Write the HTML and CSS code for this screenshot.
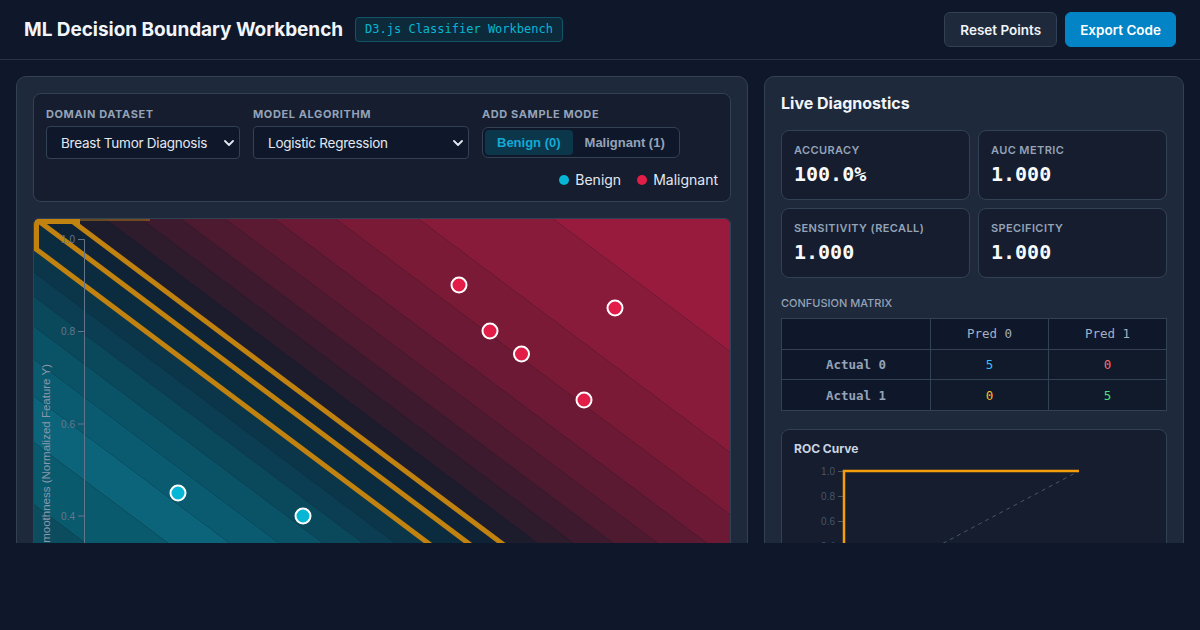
FILE: index.html
```html
<!DOCTYPE html>
<html lang="en">
<head>
<meta charset="utf-8">
<title>ML Decision Boundary Workbench</title>
<link rel="stylesheet" href="styles.css">
</head>
<body>
<header class="topbar">
  <div class="brand">
    <h1 class="title">ML Decision Boundary Workbench</h1>
    <span class="badge">D3.js Classifier Workbench</span>
  </div>
  <div class="actions">
    <button class="btn btn-secondary">Reset Points</button>
    <button class="btn btn-primary">Export Code</button>
  </div>
</header>

<main class="main">
  <section class="panel workspace">
    <div class="controls">
      <div class="fields">
        <div class="field">
          <label class="field-label">Domain Dataset</label>
          <div class="select-wrap select-dataset">
            <select class="select"><option>Breast Tumor Diagnosis</option></select>
            <svg class="chevron" width="10" height="6" viewBox="0 0 10 6"><path d="M1 1l4 4 4-4" fill="none" stroke="#e2e8f0" stroke-width="1.8" stroke-linecap="round" stroke-linejoin="round"/></svg>
          </div>
        </div>
        <div class="field">
          <label class="field-label">Model Algorithm</label>
          <div class="select-wrap select-model">
            <select class="select"><option>Logistic Regression</option></select>
            <svg class="chevron" width="10" height="6" viewBox="0 0 10 6"><path d="M1 1l4 4 4-4" fill="none" stroke="#e2e8f0" stroke-width="1.8" stroke-linecap="round" stroke-linejoin="round"/></svg>
          </div>
        </div>
        <div class="field field-mode">
          <label class="field-label">Add Sample Mode</label>
          <div class="toggle">
            <button class="toggle-btn active">Benign (0)</button>
            <button class="toggle-btn">Malignant (1)</button>
          </div>
        </div>
      </div>
      <div class="legend">
        <span class="legend-item"><span class="dot dot-benign"></span>Benign</span>
        <span class="legend-item"><span class="dot dot-malignant"></span>Malignant</span>
      </div>
    </div>

    <div class="plot">
      <svg class="plot-svg" width="696" height="540" viewBox="34 219 696 540">
        <g class="bands">
          <polygon points="0,-1000 800,-400 800,404 0,-196" fill="#981b3d"/>
          <polygon points="0,-196 800,404 800,505 0,-95" fill="#881a3a"/>
          <polygon points="0,-95 800,505 800,567 0,-33" fill="#7a1a37"/>
          <polygon points="0,-33 800,567 800,613 0,13" fill="#6b1934"/>
          <polygon points="0,13 800,613 800,650 0,50" fill="#5c1932"/>
          <polygon points="0,50 800,650 800,683 0,83" fill="#4d1a30"/>
          <polygon points="0,83 800,683 800,713 0,113" fill="#3e1a2e"/>
          <polygon points="0,113 800,713 800,740 0,140" fill="#2e1b2c"/>
          <polygon points="0,140 800,740 800,767 0,167" fill="#1d1c2d"/>
          <polygon points="0,167 800,767 800,792 0,192" fill="#0f2336"/>
          <polygon points="0,192 800,792 800,822 0,222" fill="#0b2b3e"/>
          <polygon points="0,222 800,822 800,847 0,247" fill="#0b3548"/>
          <polygon points="0,247 800,847 800,871 0,271" fill="#0b3e52"/>
          <polygon points="0,271 800,871 800,901 0,301" fill="#0a485c"/>
          <polygon points="0,301 800,901 800,934 0,334" fill="#0a5266"/>
          <polygon points="0,334 800,934 800,971 0,371" fill="#0a5b70"/>
          <polygon points="0,371 800,971 800,1017 0,417" fill="#0b6479"/>
          <polygon points="0,417 800,1017 800,1079 0,479" fill="#0a5a6e"/>
          <polygon points="0,479 800,1079 800,2600 0,2000" fill="#0b4c5e"/>
        </g>
        <g class="boundary" stroke="#c2820f" stroke-width="5" fill="none">
          <line x1="0" y1="167" x2="800" y2="767"/>
          <line x1="0" y1="192" x2="800" y2="792"/>
          <line x1="0" y1="222" x2="800" y2="822"/>
          <polyline points="36.5,250 36.5,221.5 80,221.5"/>
          <line x1="80" y1="220" x2="150" y2="220" stroke-width="2" opacity="0.45"/>
        </g>
        <g class="axis">
          <path d="M78,239.5H84.5V760" fill="none" stroke="#64748b"/>
          <line x1="78" y1="331.5" x2="84.5" y2="331.5" stroke="#64748b"/>
          <line x1="78" y1="424" x2="84.5" y2="424" stroke="#64748b"/>
          <line x1="78" y1="516" x2="84.5" y2="516" stroke="#64748b"/>
          <text class="tick" x="75" y="243">1.0</text>
          <text class="tick" x="75" y="335">0.8</text>
          <text class="tick" x="75" y="427.5">0.6</text>
          <text class="tick" x="75" y="519.5">0.4</text>
          <text class="axis-label" transform="translate(49.5,364) rotate(-90)">Smoothness (Normalized Feature Y)</text>
        </g>
        <g class="points" stroke="#ffffff" stroke-width="2">
          <circle cx="178" cy="493" r="7.5" fill="#06b6d4"/>
          <circle cx="303" cy="516" r="7.5" fill="#06b6d4"/>
          <circle cx="459" cy="285" r="7.5" fill="#e11d48"/>
          <circle cx="490" cy="331" r="7.5" fill="#e11d48"/>
          <circle cx="521.5" cy="354" r="7.5" fill="#e11d48"/>
          <circle cx="615" cy="308" r="7.5" fill="#e11d48"/>
          <circle cx="584" cy="400" r="7.5" fill="#e11d48"/>
        </g>
      </svg>
    </div>
  </section>

  <aside class="panel diagnostics">
    <h2 class="diag-title">Live Diagnostics</h2>
    <div class="metrics">
      <div class="metric"><div class="metric-label">Accuracy</div><div class="metric-value">100.0%</div></div>
      <div class="metric"><div class="metric-label">AUC Metric</div><div class="metric-value">1.000</div></div>
      <div class="metric"><div class="metric-label">Sensitivity (Recall)</div><div class="metric-value">1.000</div></div>
      <div class="metric"><div class="metric-label">Specificity</div><div class="metric-value">1.000</div></div>
    </div>

    <div class="cm-label">Confusion Matrix</div>
    <table class="cm">
      <colgroup><col class="col-head"><col><col></colgroup>
      <thead>
        <tr><th></th><th class="col-title">Pred 0</th><th class="col-title">Pred 1</th></tr>
      </thead>
      <tbody>
        <tr><th>Actual 0</th><td class="v-tn">5</td><td class="v-fp">0</td></tr>
        <tr><th>Actual 1</th><td class="v-fn">0</td><td class="v-tp">5</td></tr>
      </tbody>
    </table>

    <div class="roc">
      <div class="roc-title">ROC Curve</div>
      <svg class="roc-svg" width="359" height="150" viewBox="794 459 359 150">
        <path d="M838,470.5H844.5V595.5H838" fill="none" stroke="#475569"/>
        <line x1="838" y1="495.5" x2="844.5" y2="495.5" stroke="#475569"/>
        <line x1="838" y1="520.5" x2="844.5" y2="520.5" stroke="#475569"/>
        <line x1="838" y1="545.5" x2="844.5" y2="545.5" stroke="#475569"/>
        <text class="roc-tick" x="835" y="474">1.0</text>
        <text class="roc-tick" x="835" y="499">0.8</text>
        <text class="roc-tick" x="835" y="524">0.6</text>
        <text class="roc-tick" x="835" y="549">0.4</text>
        <line x1="844" y1="595" x2="1079" y2="470" stroke="#475569" stroke-dasharray="4 4"/>
        <polyline points="844,595 844,470 1079,470" fill="none" stroke="#f59e0b" stroke-width="2.5"/>
      </svg>
    </div>
  </aside>
</main>
</body>
</html>
```

FILE: styles.css
```css
* { box-sizing: border-box; }

body {
  margin: 0;
  background: #0f172a;
  color: #e2e8f0;
  font-family: Inter, "Noto Sans", sans-serif;
}

.topbar {
  height: 60px;
  border-bottom: 1px solid #273346;
  display: flex;
  align-items: center;
  justify-content: space-between;
  padding: 0 24px;
}

.brand {
  display: flex;
  align-items: center;
  gap: 12px;
}

.title {
  margin: 0;
  font-size: 19px;
  font-weight: 700;
  letter-spacing: -0.05px;
  color: #f1f5f9;
}

.badge {
  font-family: "DejaVu Sans Mono", "Liberation Mono", monospace;
  font-size: 12px;
  color: #06b6d4;
  background: #0d2a3a;
  border: 1px solid #14546a;
  border-radius: 4px;
  padding: 0 9px;
  height: 25px;
  line-height: 23px;
}

.actions {
  display: flex;
  gap: 8px;
}

.btn {
  height: 35px;
  padding: 0 14px;
  border-radius: 6px;
  font-family: Inter, sans-serif;
  font-size: 13.5px;
  font-weight: 600;
  color: #f1f5f9;
  border: 1px solid transparent;
}

.btn-secondary {
  background: #1e293b;
  border-color: #334155;
  padding: 0 15px;
}

.btn-primary {
  background: #0284c7;
  border-color: #0284c7;
  color: #ffffff;
}

.main {
  height: 483px;
  padding: 16px 16px 0;
  display: grid;
  grid-template-columns: 1fr 420px;
  gap: 16px;
  align-items: start;
  overflow: hidden;
}

.panel {
  background: #1e293b;
  border: 1px solid #334155;
  border-radius: 10px;
  padding: 16px;
}

.controls {
  background: #151d2e;
  border: 1px solid #334155;
  border-radius: 8px;
  padding: 12px;
  display: flex;
  flex-direction: column;
  gap: 12px;
}

.fields {
  display: flex;
  gap: 13px;
  align-items: flex-start;
}

.field {
  display: flex;
  flex-direction: column;
  gap: 4px;
}

.field-mode {
  gap: 5px;
}

.field-label {
  font-size: 11px;
  font-weight: 700;
  letter-spacing: 0.6px;
  text-transform: uppercase;
  color: #94a3b8;
  line-height: 16px;
}

.select-wrap {
  position: relative;
}

.select-dataset { width: 194px; }
.select-model { width: 216px; }

.select {
  appearance: none;
  -webkit-appearance: none;
  width: 100%;
  height: 33px;
  background: #0f172a;
  border: 1px solid #334155;
  border-radius: 4px;
  padding: 0 18px 0 14px;
  font-family: Inter, sans-serif;
  font-size: 13.5px;
  letter-spacing: -0.25px;
  color: #e2e8f0;
}

.chevron {
  position: absolute;
  right: 6px;
  top: 14px;
  pointer-events: none;
}

.toggle {
  display: flex;
  border: 1px solid #334155;
  background: #0f172a;
  border-radius: 6px;
  padding: 2px;
}

.toggle-btn {
  height: 25px;
  padding: 0 12px;
  border: 0;
  border-radius: 4px;
  background: transparent;
  font-family: "Liberation Sans", Arial, sans-serif;
  font-size: 13px;
  font-weight: 700;
  color: #94a3b8;
}

.toggle-btn.active {
  background: #0c374b;
  color: #13a9d6;
}

.legend {
  display: flex;
  justify-content: flex-end;
  gap: 16px;
  font-size: 14px;
  line-height: 18px;
  color: #e2e8f0;
}

.legend-item {
  display: flex;
  align-items: center;
  gap: 6px;
}

.dot {
  width: 10px;
  height: 10px;
  border-radius: 50%;
}

.dot-benign { background: #06b6d4; }
.dot-malignant { background: #e11d48; }

.plot {
  margin-top: 16px;
  border: 1px solid #334155;
  border-radius: 6px;
  overflow: hidden;
  background: #0f172a;
  height: 542px;
}

.plot-svg { display: block; }

.tick {
  font-family: "Liberation Sans", Arial, sans-serif;
  font-size: 10px;
  fill: #66768c;
  text-anchor: end;
}

.axis-label {
  font-family: "Liberation Sans", Arial, sans-serif;
  font-size: 11.5px;
  fill: #8b97ab;
  text-anchor: end;
}

.diag-title {
  margin: 0 0 16px;
  font-size: 16px;
  font-weight: 700;
  line-height: 21px;
  color: #f1f5f9;
}

.metrics {
  display: grid;
  grid-template-columns: 1fr 1fr;
  gap: 8px;
}

.metric {
  background: #151d2e;
  border: 1px solid #334155;
  border-radius: 8px;
  padding: 12px;
}

.metric-label {
  font-size: 11px;
  font-weight: 600;
  letter-spacing: 0.4px;
  text-transform: uppercase;
  color: #94a3b8;
  line-height: 15px;
}

.metric-value {
  margin-top: 4px;
  font-family: "DejaVu Sans Mono", "Liberation Mono", monospace;
  font-size: 20px;
  font-weight: 700;
  line-height: 25px;
  color: #f8fafc;
}

.cm-label {
  margin: 18px 0 7px;
  font-size: 11px;
  font-weight: 500;
  text-transform: uppercase;
  color: #94a3b8;
  line-height: 15px;
}

.cm {
  width: 100%;
  border-collapse: collapse;
  font-family: "DejaVu Sans Mono", "Liberation Mono", monospace;
  font-size: 12.5px;
}

.col-head { width: 149px; }

.cm th,
.cm td {
  height: 30.7px;
  padding: 0;
  border: 1px solid #334155;
  text-align: center;
}

.cm th {
  background: #0f172a;
  color: #94a3b8;
  font-weight: 700;
}

.cm th.col-title {
  font-weight: 400;
  color: #a3b0c2;
}

.cm td { background: #111a2b; }

.v-tn { color: #38bdf8; }
.v-fp { color: #f87171; }
.v-fn { color: #fbbf24; }
.v-tp { color: #4ade80; }

.roc {
  margin-top: 18px;
  background: #151d2e;
  border: 1px solid #334155;
  border-radius: 8px;
  padding: 12px;
}

.roc-title {
  font-size: 12px;
  font-weight: 700;
  line-height: 14px;
  color: #cbd5e1;
}

.roc-svg {
  display: block;
  margin-top: 4px;
}

.roc-tick {
  font-family: "Liberation Sans", Arial, sans-serif;
  font-size: 10px;
  fill: #475569;
  text-anchor: end;
}
```
